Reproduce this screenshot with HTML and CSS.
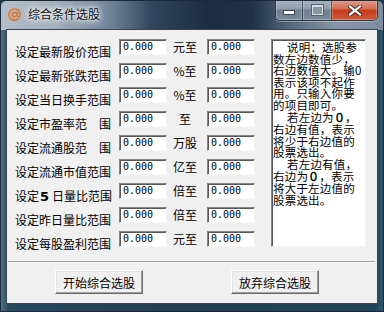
FILE: index.html
```html
<!DOCTYPE html>
<html lang="zh-CN">
<head>
    <meta charset="UTF-8">
    <title>综合条件选股</title>
    <link rel="stylesheet" href="styles.css">
</head>
<body>
    <div class="window">
        <div class="titlebar">
            <svg class="app-icon" width="13" height="13" viewBox="0 0 13 13" aria-hidden="true">
                <path d="M10.8 10.2 A5.6 5.6 0 1 1 12.1 6.5 L12.1 7.6 A1.6 1.6 0 0 1 9 7.6 L9 4.3" fill="none" stroke="#e4782a" stroke-width="1.7"/>
                <circle cx="6.5" cy="6.5" r="2.3" fill="none" stroke="#e4782a" stroke-width="1.6"/>
            </svg>
            <span class="title">综合条件选股</span>
            <div class="caption-btns">
                <div class="cap min"><span class="glyph-min"></span></div>
                <div class="cap max"><span class="glyph-max"></span></div>
                <div class="cap close">
                    <svg width="14" height="11" viewBox="0 0 14 11" aria-hidden="true">
                        <path d="M2 1.5 L12 9.5 M12 1.5 L2 9.5" stroke="#3a2a28" stroke-width="4" stroke-linecap="square"/>
                        <path d="M2 1.5 L12 9.5 M12 1.5 L2 9.5" stroke="#fff" stroke-width="2.2" stroke-linecap="square"/>
                    </svg>
                </div>
            </div>
        </div>

        <div class="client">
            <div class="form">
                <span class="label">设定最新股价范围</span>
                <span class="field">0.000</span>
                <span class="unit">元至</span>
                <span class="field">0.000</span>

                <div class="note">
                    <p class="indent">说明：选股参</p>
                    <p>数左边数值少，</p>
                    <p>右边数值大。输0</p>
                    <p>表示该项不起作</p>
                    <p>用。只输入你要</p>
                    <p>的项目即可。</p>
                    <p class="indent">若左边为<b>０</b>，</p>
                    <p>右边有值，表示</p>
                    <p>将少于右边值的</p>
                    <p>股票选出。</p>
                    <p class="indent">若左边有值，</p>
                    <p>右边为<b>０</b>，表示</p>
                    <p>将大于左边值的</p>
                    <p>股票选出。</p>
                </div>

                <span class="label">设定最新张跌范围</span>
                <span class="field">0.000</span>
                <span class="unit">%至</span>
                <span class="field">0.000</span>

                <span class="label">设定当日换手范围</span>
                <span class="field">0.000</span>
                <span class="unit">%至</span>
                <span class="field">0.000</span>

                <span class="label">设定市盈率范　围</span>
                <span class="field">0.000</span>
                <span class="unit">至</span>
                <span class="field">0.000</span>

                <span class="label">设定流通股范　围</span>
                <span class="field">0.000</span>
                <span class="unit">万股</span>
                <span class="field">0.000</span>

                <span class="label">设定流通市值范围</span>
                <span class="field">0.000</span>
                <span class="unit">亿至</span>
                <span class="field">0.000</span>

                <span class="label">设定<b class="num">5</b>日量比范围</span>
                <span class="field">0.000</span>
                <span class="unit">倍至</span>
                <span class="field">0.000</span>

                <span class="label">设定昨日量比范围</span>
                <span class="field">0.000</span>
                <span class="unit">倍至</span>
                <span class="field">0.000</span>

                <span class="label">设定每股盈利范围</span>
                <span class="field">0.000</span>
                <span class="unit">元至</span>
                <span class="field">0.000</span>
            </div>

            <div class="sep"></div>

            <div class="actions">
                <button class="btn">开始综合选股</button>
                <button class="btn">放弃综合选股</button>
            </div>
        </div>
    </div>
</body>
</html>
```

FILE: styles.css
```css
html, body {
    margin: 0;
    padding: 0;
    background: #1b3a4e;
}

body {
    font-family: "Noto Sans CJK SC", "Noto Sans", sans-serif;
    font-size: 12px;
    color: #000;
}

.window {
    width: 384px;
    height: 312px;
    display: flex;
    flex-direction: column;
    box-sizing: border-box;
    border: 1px solid #1a2a38;
    border-radius: 6px 6px 0 0;
    overflow: hidden;
    background:
        linear-gradient(90deg, #b3bec9 0%, #a1afbc 14%, #72859a 28%, #2f445b 40%, #1b2b41 55%, #20324a 66%, #56697e 76%, #8897a6 88%, #7c8c9c 100%) top / 100% 29px no-repeat,
        linear-gradient(90deg, #4d7186 0%, #27495d 2%, #203f52 50%, #1f4658 98%, #2d5468 100%);
}

/* title bar */
.titlebar {
    height: 28px;
    flex: none;
    display: flex;
    align-items: flex-start;
}

.app-icon {
    margin: 7px 0 0 7px;
    flex: none;
}

.title {
    margin: 5px 0 0 7px;
    line-height: 16px;
    font-size: 12px;
    color: #111;
    text-shadow: 0 0 6px #fff, 0 0 10px #fff, 0 0 3px #fff;
}

.caption-btns {
    margin-left: auto;
    margin-right: 5px;
    margin-top: -1px;
    display: flex;
    border: 1px solid #2b3948;
    border-top: none;
    border-radius: 0 0 5px 5px;
    overflow: hidden;
    box-shadow: 0 1px 0 rgba(255, 255, 255, 0.35);
}

.cap {
    height: 20px;
    display: flex;
    align-items: center;
    justify-content: center;
    box-shadow: inset 0 0 0 1px rgba(255, 255, 255, 0.25);
}

.cap.min,
.cap.max {
    width: 26px;
    background: linear-gradient(#a9b5c1 0%, #8e9cab 45%, #6f7f8f 50%, #7a8b9b 100%);
    border-right: 1px solid #3c4a58;
}

.cap.max {
    width: 28px;
}

.cap.close {
    width: 45px;
    background: linear-gradient(#e2a192 0%, #d3694e 45%, #c23b1a 52%, #d2593a 100%);
}

.glyph-min {
    width: 10px;
    height: 3px;
    margin-top: 5px;
    background: #fff;
    box-shadow: 0 0 0 1px #3a4652;
}

.glyph-max {
    width: 9px;
    height: 7px;
    margin-top: -1px;
    border: 1px solid #d7dee5;
    border-top-width: 2px;
    box-shadow: 0 0 0 1px #55626f;
    background: #8a98a6;
}

/* client area */
.client {
    flex: 1;
    margin: 0 5px 7px 5px;
    border: 1px solid #3a4450;
    background: #f0f0f0;
    display: flex;
    flex-direction: column;
}

.form {
    display: grid;
    grid-template-columns: 104px 48px 40px 48px 111px;
    grid-auto-rows: 16px;
    row-gap: 8px;
    padding: 9px 0 0 8px;
}

.label {
    line-height: 25px;
    white-space: nowrap;
}

.label .num {
    font-family: "DejaVu Sans", sans-serif;
    font-size: 13px;
    padding: 0 3px 0 1px;
}

.field {
    box-sizing: border-box;
    height: 16px;
    background: #fff;
    border-top: 1px solid #858585;
    border-left: 1px solid #858585;
    border-right: 1px solid #f4f4f4;
    border-bottom: 1px solid #f4f4f4;
    box-shadow: inset 1px 1px 0 #5a5a5a;
    padding-left: 3px;
    font-family: "DejaVu Sans Mono", monospace;
    font-size: 10px;
    line-height: 14px;
}

.unit {
    text-align: center;
    padding-right: 4px;
    line-height: 16px;
}

.note {
    grid-column: 5;
    grid-row: 1 / span 9;
    margin-left: 16px;
    width: 95px;
    box-sizing: border-box;
    background: #fff;
    border-top: 1px solid #858585;
    border-left: 1px solid #858585;
    border-right: 1px solid #f4f4f4;
    border-bottom: 1px solid #f4f4f4;
    box-shadow: inset 1px 1px 0 #5a5a5a;
    padding: 2px 0 0 1px;
    overflow: hidden;
}

.note p {
    margin: 0;
    font-size: 11.5px;
    line-height: 11.6px;
    white-space: nowrap;
    letter-spacing: 0.2px;
}

.note .indent {
    text-indent: 14px;
}

.note b {
    font-family: "DejaVu Serif", serif;
    font-size: 11px;
}

.sep {
    margin: 14px 2px 0 1px;
    border-top: 1px solid #a0a0a0;
    border-bottom: 1px solid #fff;
}

.actions {
    display: flex;
    gap: 88px;
    padding: 7px 0 0 48px;
}

.btn {
    width: 88px;
    height: 24px;
    font-family: "Noto Sans CJK SC", "Noto Sans", sans-serif;
    font-size: 12px;
    color: #000;
    background: #f0f0f0;
    border: 1px solid;
    border-color: #fff #696969 #696969 #fff;
    box-shadow: inset -1px -1px 0 #a0a0a0, inset 1px 1px 0 #e3e3e3;
    padding: 0;
}
```
